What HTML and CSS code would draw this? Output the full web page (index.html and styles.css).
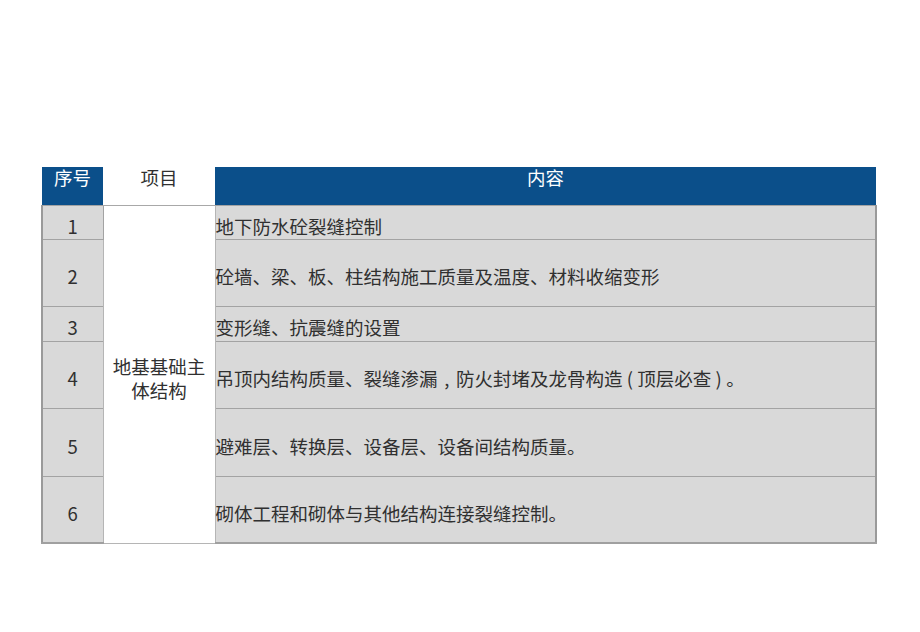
FILE: index.html
```html
<!DOCTYPE html>
<html lang="zh-CN">
<head>
<meta charset="utf-8">
<title>主体结构</title>
<link rel="stylesheet" href="styles.css">
</head>
<body>
<div class="page">
  <table class="grid">
    <colgroup>
      <col class="c-no">
      <col class="c-item">
      <col class="c-content">
    </colgroup>
    <thead>
      <tr class="r-head">
        <th class="h-blue">序号</th>
        <th class="h-white">项目</th>
        <th class="h-blue">内容</th>
      </tr>
    </thead>
    <tbody>
      <tr class="r-34">
        <td class="no">1</td>
        <td class="item" rowspan="6"><span class="line">地基基础主</span><span class="line">体结构</span></td>
        <td class="text">地下防水砼裂缝控制</td>
      </tr>
      <tr class="r-67">
        <td class="no">2</td>
        <td class="text">砼墙、梁、板、柱结构施工质量及温度、材料收缩变形</td>
      </tr>
      <tr class="r-35">
        <td class="no">3</td>
        <td class="text">变形缝、抗震缝的设置</td>
      </tr>
      <tr class="r-67">
        <td class="no">4</td>
        <td class="text">吊顶内结构质量、裂缝渗漏<span class="pc">,</span>防火封堵及龙骨构造<span class="pp">(</span>顶层必查<span class="pp">)</span>。</td>
      </tr>
      <tr class="r-68">
        <td class="no">5</td>
        <td class="text">避难层、转换层、设备层、设备间结构质量。</td>
      </tr>
      <tr class="r-67">
        <td class="no">6</td>
        <td class="text">砌体工程和砌体与其他结构连接裂缝控制。</td>
      </tr>
    </tbody>
  </table>
</div>
</body>
</html>
```
FILE: styles.css
```css
html, body {
  margin: 0;
  padding: 0;
  background: #ffffff;
}

.page {
  width: 920px;
  height: 632px;
  padding: 167px 0 0 41px;
  box-sizing: border-box;
}

.grid {
  border-collapse: collapse;
  table-layout: fixed;
  width: 834px;
  font-family: "Noto Sans CJK SC", "Noto Sans", sans-serif;
  font-size: 18.5px;
  color: #303030;
}

.c-no { width: 61px; }
.c-item { width: 112px; }
.c-content { width: 661px; }

.grid th,
.grid td {
  padding: 0;
  box-sizing: border-box;
}

.r-head { height: 38px; }
.r-34 { height: 34px; }
.r-35 { height: 35px; }
.r-67 { height: 67px; }
.r-68 { height: 68px; }

.grid th {
  font-weight: normal;
  vertical-align: top;
  line-height: 20px;
  text-align: center;
}

.h-blue {
  background: #0b4f8a;
  color: #ffffff;
}

.h-white {
  background: #ffffff;
  color: #303030;
  border-bottom: 1px solid #a8a8a8;
}

.grid td {
  vertical-align: middle;
  line-height: 22px;
  padding-top: 7px;
}

.no {
  background: #d9d9d9;
  text-align: center;
  border: 1px solid #a3a3a3;
  border-left: 2px solid #9a9a9a;
}

.item {
  background: #ffffff;
  text-align: center;
  border: 1px solid #b5b5b5;
}

.line {
  display: block;
  line-height: 24px;
}

.text {
  background: #d9d9d9;
  text-align: left;
  padding-left: 0;
  border: 1px solid #a3a3a3;
  border-right: 2px solid #9a9a9a;
  white-space: nowrap;
}

.pc,
.pp {
  display: inline-block;
  text-align: center;
}

.pc { width: 1em; }
.pp { width: 0.8em; }

.grid tbody tr:last-child td {
  border-bottom: 2px solid #a0a0a0;
}
```
